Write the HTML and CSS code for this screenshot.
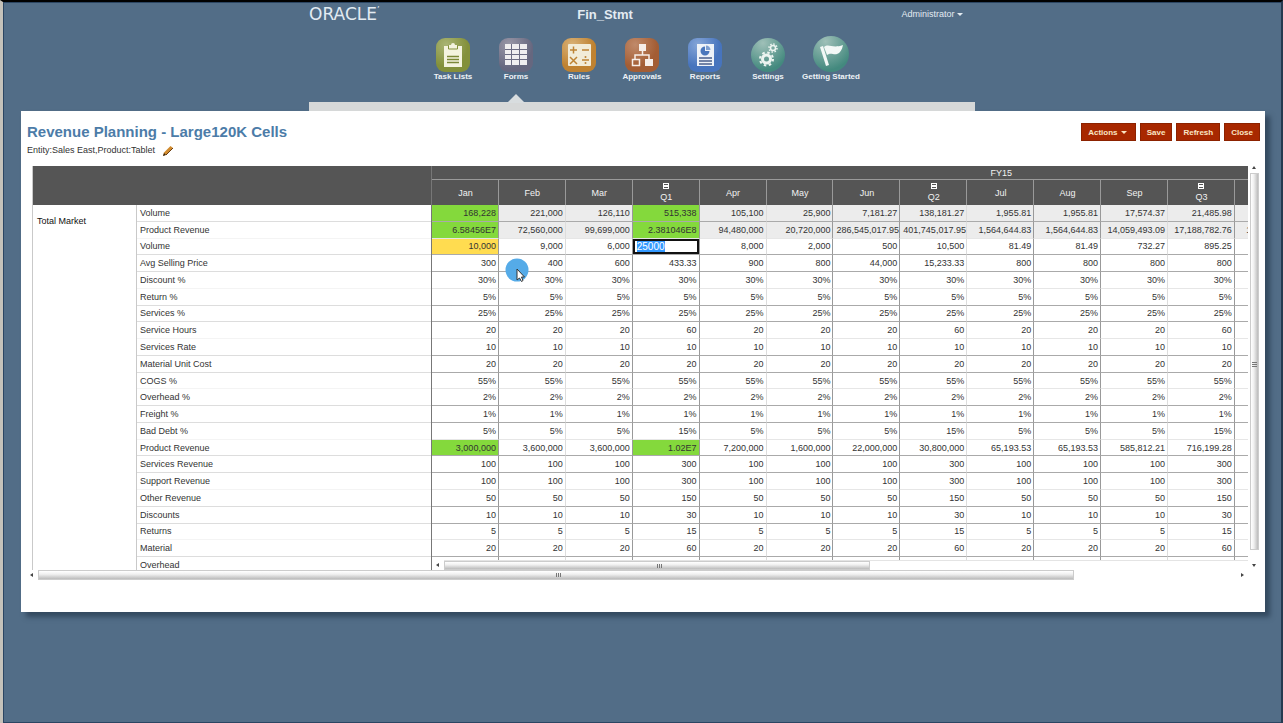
FILE: index.html
```html
<!DOCTYPE html>
<html lang="en">
<head>
    <meta charset="UTF-8">
    <meta name="viewport" content="width=device-width, initial-scale=1.0">
    <title>Fin_Stmt</title>
    <link rel="stylesheet" href="styles.css">
</head>
<body>
    <header class="header">
        <div class="topbar">
            <span class="brand">ORACLE<sup>&#8217;</sup></span>
            <h1>Fin_Stmt</h1>
            <button class="user" type="button">Administrator <i class="caret"></i></button>
        </div>
        <nav class="nav">
            <a href="#" class="nav-item">
                <span class="tile olive"><svg viewBox="0 0 34 34"><path fill="#f4f3df" d="M8 8h5V7h2a2 2 0 0 1 4 0h2v1h5v21H8z"/><path stroke="#83903a" d="M12.500 7.500v3.500h9v-3.500" fill="none"/><path stroke="#7b8737" stroke-width="1.500" d="M11 18.500h12M11 21.500h12M11 24.500h12"/></svg></span>
                Task Lists
            </a>
            <a href="#" class="nav-item active">
                <span class="tile mauve"><svg viewBox="0 0 34 34"><path fill="#f0eef0" d="M6 6h22v21H6z"/><path stroke="#6d6d84" d="M12.500 6v21M20.500 6v21M6 11.500h22M6 16.500h22M6 21.500h22"/></svg></span>
                Forms
            </a>
            <a href="#" class="nav-item">
                <span class="tile orange"><svg viewBox="0 0 34 34"><rect x="6" y="6" width="23" height="22" rx="1" fill="#f2ecd8"/><path stroke="#bd8334" stroke-width="1.500" fill="none" d="M8 12h7M11.500 8.500v7M20 12h7M8 19l7 7M15 19l-7 7M20 22h7"/><circle cx="23.500" cy="19" r="1" fill="#bd8334"/><circle cx="23.500" cy="25" r="1" fill="#bd8334"/></svg></span>
                Rules
            </a>
            <a href="#" class="nav-item">
                <span class="tile rust"><svg viewBox="0 0 34 34"><path fill="#f6eee9" d="M14 6h7v7h-7zM20 21h8v7h-8z"/><path fill="none" stroke="#f6eee9" stroke-width="1.500" d="M17.500 13v4M10 21v-4h14v4M7.500 21.500h7v6h-7z"/></svg></span>
                Approvals
            </a>
            <a href="#" class="nav-item">
                <span class="tile blue"><svg viewBox="0 0 34 34"><path fill="#eef2f8" d="M9 6h17v22H9z"/><path fill="#4b77bc" d="M17 8.500a4.500 4.500 0 1 0 4.500 4.500H17z"/><path fill="#7f9fd0" d="M18 7.500v4.500h4.500A4.500 4.500 0 0 0 18 7.500z"/><path stroke="#4a5f8c" stroke-width="1.500" d="M11 20h13M11 23h13M11 26h13"/></svg></span>
                Reports
            </a>
            <a href="#" class="nav-item">
                <span class="tile teal round"><svg viewBox="0 0 34 34" fill="none" stroke="#edf5f1"><circle cx="15.500" cy="21" r="4" stroke-width="3"/><circle cx="15.500" cy="21" r="6.500" stroke-width="2" stroke-dasharray="2.500 2.600"/><circle cx="22" cy="10" r="2.500" stroke-width="1.500"/><circle cx="22" cy="10" r="4" stroke-width="1.500" stroke-dasharray="1.500 1.600"/></svg></span>
                Settings
            </a>
            <a href="#" class="nav-item">
                <span class="tile teal round large"><svg viewBox="0 0 36 36"><path fill="#f3f8f6" d="M7 11l3-1 6 19-3 1zM11 11c5-4 8 2 19-2-1 5-3 8-6 9-4 1-6-2-10 1z"/></svg></span>
                Getting Started
            </a>
        </nav>
        <div class="nav-strip"></div>
    </header>

    <main class="panel">
        <div class="panel-head">
            <div>
                <h2>Revenue Planning - Large120K Cells</h2>
                <p class="pov">Entity:Sales East,Product:Tablet
                    <button class="edit" type="button" aria-label="Edit"><svg viewBox="0 0 12 12"><path d="M1 11l1-3.500L8.500 1l2.500 2-6.500 6.500z" fill="#d08a2e"/><path d="M1 11l1-3 2 2z" fill="#33230f"/><path d="M4 10l7-7" stroke="#6b3d10"/></svg></button>
                </p>
            </div>
            <div class="actions">
                <button class="btn" type="button">Actions <i class="caret"></i></button>
                <button class="btn" type="button">Save</button>
                <button class="btn" type="button">Refresh</button>
                <button class="btn" type="button">Close</button>
            </div>
        </div>

        <div class="sheet">
            <div class="pane pane-rows">
                <table class="grid grid-rows">
                    <colgroup>
                        <col class="col-market">
                        <col>
                    </colgroup>
                    <thead>
                        <tr class="year"><th colspan="2"></th></tr>
                        <tr class="months"><th colspan="2"></th></tr>
                    </thead>
                    <tbody id="rowHeads"></tbody>
                </table>
            </div>
            <div class="pane pane-data">
                <table class="grid grid-data">
                    <thead>
                        <tr class="year"><th colspan="17">FY15</th></tr>
                        <tr class="months" id="months"></tr>
                    </thead>
                    <tbody id="rowData"></tbody>
                </table>
                <div class="scroll-x inner">
                    <i class="arrow left"></i>
                    <div class="track"><div class="thumb"></div></div>
                </div>
            </div>
            <div class="scroll-y">
                <i class="arrow up"></i>
                <div class="thumb"></div>
                <i class="arrow down"></i>
            </div>
        </div>
        <div class="scroll-x outer">
            <i class="arrow left"></i>
            <div class="track"><div class="thumb"></div></div>
            <i class="arrow right"></i>
        </div>
    </main>

    <svg class="pointer" viewBox="0 0 24 24"><circle cx="12" cy="12" r="11.500" fill="#55abe8"/><path d="M12 11v11l2.500-2 2 3.500 1.500-1-1.500-3.500h3z" fill="#fff" stroke="#333"/></svg>

    <script>
        const columnCount = 17;
        const periods = ["Jan", "Feb", "Mar", "Q1", "Apr", "May", "Jun", "Q2", "Jul", "Aug", "Sep", "Q3"];

        // same value in every month, quarters have their own
        function spread(month, quarter) {
            return [month, month, month, quarter, month, month, month, quarter, month, month, month, quarter];
        }

        const rows = [
            ["Volume", ["168,228", "221,000", "126,110", "515,338", "105,100", "25,900", "7,181.27", "138,181.27", "1,955.81", "1,955.81", "17,574.37", "21,485.98"]],
            ["Product Revenue", ["6.58456E7", "72,560,000", "99,699,000", "2.381046E8", "94,480,000", "20,720,000", "286,545,017.95", "401,745,017.95", "1,564,644.83", "1,564,644.83", "14,059,493.09", "17,188,782.76", "1,564,644.83"]],
            ["Volume", ["10,000", "9,000", "6,000", "25000", "8,000", "2,000", "500", "10,500", "81.49", "81.49", "732.27", "895.25"]],
            ["Avg Selling Price", ["300", "400", "600", "433.33", "900", "800", "44,000", "15,233.33", "800", "800", "800", "800"]],
            ["Discount %", spread("30%", "30%")],
            ["Return %", spread("5%", "5%")],
            ["Services %", spread("25%", "25%")],
            ["Service Hours", spread("20", "60")],
            ["Services Rate", spread("10", "10")],
            ["Material Unit Cost", spread("20", "20")],
            ["COGS %", spread("55%", "55%")],
            ["Overhead %", spread("2%", "2%")],
            ["Freight %", spread("1%", "1%")],
            ["Bad Debt %", spread("5%", "15%")],
            ["Product Revenue", ["3,000,000", "3,600,000", "3,600,000", "1.02E7", "7,200,000", "1,600,000", "22,000,000", "30,800,000", "65,193.53", "65,193.53", "585,812.21", "716,199.28"]],
            ["Services Revenue", spread("100", "300")],
            ["Support Revenue", spread("100", "300")],
            ["Other Revenue", spread("50", "150")],
            ["Discounts", spread("10", "30")],
            ["Returns", spread("5", "15")],
            ["Material", spread("20", "60")],
            ["Overhead", []]
        ];

        const changed = ["0-0", "0-3", "1-0", "1-3", "14-0", "14-3"];

        let months = "";
        for (let c = 0; c < columnCount; c++) {
            const name = periods[c] || "";
            const toggle = name[0] === "Q" ? `<button class="toggle" type="button" aria-label="Collapse ${name}"></button>` : "";
            months += `<th>${toggle}${name}</th>`;
        }
        document.getElementById("months").innerHTML = months;

        let heads = "";
        let data = "";
        rows.forEach(function (row, r) {
            const market = r === 0 ? `<th class="market" rowspan="${rows.length}">Total Market</th>` : "";
            heads += `<tr>${market}<th class="label">${row[0]}</th></tr>`;

            data += r < 2 ? '<tr class="readonly">' : "<tr>";
            for (let c = 0; c < columnCount; c++) {
                const value = row[1][c] || "&nbsp;";
                if (r === 2 && c === 3) {
                    data += `<td class="editing"><input id="cellInput" type="text" value="${value}" aria-label="Volume Q1"></td>`;
                } else {
                    let cls = changed.includes(r + "-" + c) ? "changed" : "";
                    if (r === 2 && c === 0) cls = "dirty";
                    data += `<td class="${cls}">${value}</td>`;
                }
            }
            data += "</tr>";
        });
        document.getElementById("rowHeads").innerHTML = heads;
        document.getElementById("rowData").innerHTML = data;

        const cellInput = document.getElementById("cellInput");
        cellInput.focus({ preventScroll: true });
        cellInput.select();
    </script>
</body>
</html>
```

FILE: styles.css
```css
* {
    box-sizing: border-box;
}

body {
    margin: 0;
    min-height: 100vh;
    font-family: "Liberation Sans", Arial, sans-serif;
    font-size: 9px;
    color: #333;
    background-color: #526d87;
    border-top: 2px solid #000;
    border-left: 3px solid #c5c2ba;
    border-right: 2px solid #253a50;
    box-shadow: inset 1px 1px 0 #2b4562, inset 0 -1px 0 #2b4562;
    position: relative;
}

button {
    font-family: inherit;
    font-size: 9px;
    border: none;
    padding: 0;
    background: none;
    cursor: pointer;
}

h1, h2, p {
    margin: 0;
}

/* header */
.header {
    width: 52.1%;
    height: 109px;
    margin: 0 auto;
    display: flex;
    flex-direction: column;
}

.topbar {
    display: flex;
    justify-content: space-between;
    align-items: center;
    height: 24px;
    padding-right: 12px;
    color: #e3ebf2;
}

.brand {
    flex: 1;
    font-family: "DejaVu Sans", sans-serif;
    font-size: 17px;
    line-height: 20px;
}

.brand sup {
    font-size: 8px;
    line-height: 8px;
}

.topbar h1 {
    margin-right: 62px;
    font-size: 13px;
}

.user {
    flex: 1;
    text-align: right;
    color: #e3ebf2;
}

.caret {
    display: inline-block;
    border: 3px solid transparent;
    border-top-color: currentColor;
    border-bottom: none;
    vertical-align: middle;
}

.nav {
    display: flex;
    justify-content: center;
    align-items: flex-end;
    height: 56px;
}

.nav-item {
    position: relative;
    width: 63px;
    display: flex;
    flex-direction: column;
    align-items: center;
    font-size: 8px;
    font-weight: bold;
    line-height: 10px;
    color: #eef2f6;
    text-decoration: none;
    white-space: nowrap;
}

.nav-item.active::after {
    content: "";
    position: absolute;
    top: 56px;
    border: 9px solid transparent;
    border-bottom-color: #d8dddf;
    border-top: none;
}

.tile {
    width: 34px;
    height: 34px;
    border-radius: 9px;
}

.tile svg {
    display: block;
}

.olive { background: radial-gradient(circle at 30% 20%, #a9b474, #83903a 60%); }
.mauve { background: radial-gradient(circle at 30% 20%, #9a98a8, #66677f 65%); }
.orange { background: radial-gradient(circle at 30% 20%, #d9b176, #bf8231 60%); }
.rust { background: radial-gradient(circle at 30% 20%, #c08a6a, #a35d34 60%); }
.blue { background: radial-gradient(circle at 30% 20%, #86a6d8, #4774bd 60%); }
.teal { background: radial-gradient(circle at 35% 15%, #9fc0b8, #43897e 75%); }

.round {
    border-radius: 50%;
}

.large {
    width: 36px;
    height: 36px;
}

.nav-strip {
    height: 9px;
    margin-top: auto;
    background-color: #d6d8d8;
}

/* panel */
.panel {
    margin: 0 16px 0 18px;
    padding: 12px 5px 32px 6px;
    background-color: #fff;
    box-shadow: 5px 5px 5px #33495f;
}

.panel-head {
    display: flex;
    justify-content: space-between;
    align-items: flex-start;
    height: 43px;
}

.panel-head h2 {
    font-size: 15px;
    line-height: 18px;
    color: #4c7ca8;
}

.pov {
    line-height: 18px;
}

.edit {
    margin-left: 4px;
    vertical-align: middle;
}

.edit svg {
    display: block;
    width: 12px;
    height: 12px;
}

.actions {
    display: flex;
    gap: 4px;
}

.btn {
    height: 18px;
    padding: 0 6px;
    font-size: 8px;
    font-weight: bold;
    color: #fbe6c4;
    background-color: #a82800;
    border: 1px solid #8c2200;
}

.btn .caret {
    margin: 0 2px 0 1px;
}

/* grid */
.sheet {
    display: grid;
    grid-template-columns: 400px minmax(0, 1fr) 12px;
    height: 404px;
    margin-left: 5px;
}

.pane {
    overflow: hidden;
}

.pane-rows {
    border-left: 1px solid #c9c9c9;
    border-right: 1px solid #777;
}

.pane-data {
    position: relative;
}

.grid {
    border-collapse: separate;
    border-spacing: 0;
    table-layout: fixed;
    height: 408px;
}

.grid-rows {
    width: 100%;
}

.col-market {
    width: 104px;
}

.grid-data {
    width: 139.4%;
}

.grid th, .grid td {
    padding: 0 2px 0 3px;
    font-weight: normal;
    line-height: 12px;
    overflow: hidden;
    white-space: nowrap;
}

.grid thead th {
    background-color: #555;
    color: #f2f2f2;
}

.year {
    height: 14px;
}

.months {
    height: 25px;
}

.grid-data .year th {
    border-bottom: 1px solid #999;
}

.grid-data .months th {
    border-right: 1px solid #999;
}

.toggle {
    display: block;
    width: 6px;
    height: 6px;
    margin: 0 auto 2px;
    border: 1px solid #fff;
    background: linear-gradient(#fff, #fff) center / 4px 2px no-repeat;
}

.grid .label {
    padding-left: 3px;
    text-align: left;
    border-bottom: 1px solid #ddd;
}

.grid .market {
    padding: 10px 4px;
    text-align: left;
    vertical-align: top;
    color: #111;
    border-right: 1px solid #c9c9c9;
}

.grid td {
    text-align: right;
    border-right: 1px solid #999;
    border-bottom: 1px solid #aaa;
}

.grid td:nth-child(3n+2) {
    border-right-color: #ddd;
}

.grid tbody tr:nth-child(3n+2) td {
    border-bottom-color: #e6e6e6;
}

.grid tbody tr:nth-child(3n+2) .label {
    border-bottom-color: #f4f4f4;
}

.grid .readonly td {
    background-color: #ececec;
}

.grid td.changed {
    background-color: #84d93c;
}

.grid td.dirty {
    background-color: #ffdc50;
}

/* the editor lies over its cell */
.grid td.editing {
    position: relative;
}

.editing input {
    position: absolute;
    top: 0;
    left: 0;
    width: 100%;
    height: 100%;
    padding: 0 2px;
    font-family: inherit;
    font-size: 10px;
    border: 2px solid #111;
    border-radius: 0;
    outline: none;
}

.editing input::selection {
    color: #fff;
    background-color: #3399ff;
}

/* scrollbars */
.scroll-x {
    display: flex;
    align-items: center;
    gap: 5px;
    height: 10px;
    background-color: #fff;
}

.scroll-x .track {
    flex: 1;
}

.thumb {
    position: relative;
    border: 1px solid #ccc;
}

.scroll-x .thumb {
    height: 10px;
    background: linear-gradient(#fff, #f0f0f0 40%, #bbb);
}

.inner {
    position: absolute;
    left: 0;
    right: 0;
    bottom: 0;
    padding-left: 4px;
}

.inner .track {
    border-top: 1px solid #e4e4e4;
}

.inner .thumb {
    width: 53%;
    height: 9px;
}

.outer {
    margin: 0 16px 0 3px;
}

.outer .thumb {
    width: 86.5%;
}

.thumb::after {
    content: "";
    position: absolute;
    left: 50%;
    top: 2px;
    width: 5px;
    height: 4px;
    background: repeating-linear-gradient(90deg, #777 0 1px, transparent 1px 2px);
}

.scroll-y {
    display: flex;
    flex-direction: column;
    align-items: center;
    gap: 4px;
    padding-bottom: 3px;
}

.scroll-y .thumb {
    flex: 0 0 377px;
    width: 9px;
    background: linear-gradient(90deg, #fff, #f0f0f0 40%, #bbb);
}

.scroll-y .thumb::after {
    left: 1px;
    top: 50%;
    height: 5px;
    background: repeating-linear-gradient(#777 0 1px, transparent 1px 2px);
}

.arrow {
    flex: none;
    border: 2px solid transparent;
}

.arrow.left {
    border-right: 3px solid #444;
    border-left: none;
}

.arrow.right {
    border-left: 3px solid #444;
    border-right: none;
}

.arrow.up {
    border-bottom: 3px solid #444;
    border-top: none;
}

.arrow.down {
    margin-top: auto;
    border-top: 3px solid #444;
    border-bottom: none;
}

/* click highlight with the mouse arrow */
.pointer {
    position: absolute;
    left: 502px;
    top: 256px;
    width: 24px;
    height: 24px;
}
```
